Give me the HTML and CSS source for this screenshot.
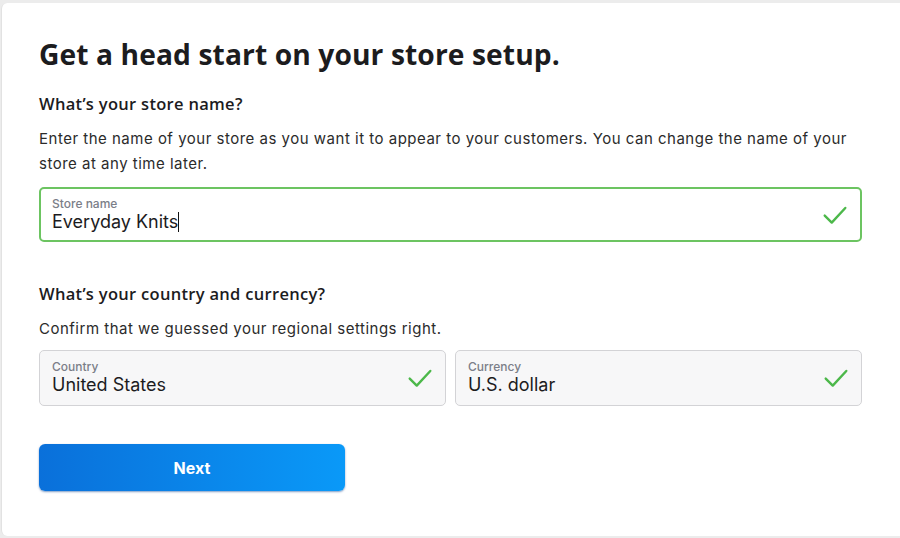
FILE: index.html
```html
<!DOCTYPE html>
<html lang="en">
<head>
<meta charset="utf-8">
<title>Store setup</title>
<link rel="stylesheet" href="styles.css">
</head>
<body>
<main class="card">
  <h1 class="title">Get a head start on your store setup.</h1>

  <section class="section">
    <h2 class="question">What’s your store name?</h2>
    <p class="help">Enter the name of your store as you want it to appear to your customers. You can change the name of your store at any time later.</p>
    <div class="field field-active">
      <div class="field-body">
        <span class="field-label">Store name</span>
        <span class="field-value">Everyday Knits<span class="caret"></span></span>
      </div>
      <svg class="check" viewBox="0 0 24 24" width="26" height="26"><path d="M2.5 12.5 L9 19 L21.5 5.5" fill="none" stroke="#4cb84a" stroke-width="2.2" stroke-linecap="round" stroke-linejoin="round"/></svg>
    </div>
  </section>

  <section class="section section-2">
    <h2 class="question">What’s your country and currency?</h2>
    <p class="help help-short">Confirm that we guessed your regional settings right.</p>
    <div class="row">
      <div class="field field-select">
        <div class="field-body">
          <span class="field-label">Country</span>
          <span class="field-value">United States</span>
        </div>
        <svg class="check" viewBox="0 0 24 24" width="26" height="26"><path d="M2.5 12.5 L9 19 L21.5 5.5" fill="none" stroke="#4cb84a" stroke-width="2.2" stroke-linecap="round" stroke-linejoin="round"/></svg>
      </div>
      <div class="field field-select">
        <div class="field-body">
          <span class="field-label">Currency</span>
          <span class="field-value">U.S. dollar</span>
        </div>
        <svg class="check" viewBox="0 0 24 24" width="26" height="26"><path d="M2.5 12.5 L9 19 L21.5 5.5" fill="none" stroke="#4cb84a" stroke-width="2.2" stroke-linecap="round" stroke-linejoin="round"/></svg>
      </div>
    </div>
  </section>

  <button class="next" type="button">Next</button>
</main>
</body>
</html>
```

FILE: styles.css
```css
* { box-sizing: border-box; }
html, body { margin: 0; height: 100%; }
body {
  background: #ececec;
  padding: 3px 0 2px 1px;
  font-family: Inter, "Noto Sans", sans-serif;
  color: #1f1f1f;
  overflow: hidden;
}
.card {
  background: #ffffff;
  border-radius: 6px 0 0 6px;
  border-left: 1px solid #e2e2e2;
  height: 533px;
  padding: 35px 38px 0 37px;
  width: 905px;
}
.title {
  margin: 0;
  font-family: "Open Sans", Lato, sans-serif;
  font-weight: 700;
  font-size: 28.2px;
  line-height: 32px;
  color: #1c1c1e;
  letter-spacing: 0.1px;
}
.section { margin-top: 24px; }
.section-2 { margin-top: 42px; }
.question {
  margin: 0;
  font-family: "Open Sans", Lato, sans-serif;
  font-weight: 600;
  font-size: 16.5px;
  line-height: 20px;
  color: #1c1c1e;
  letter-spacing: 0.3px;
}
.help {
  margin: 12px 0 11px;
  font-size: 15px;
  line-height: 25px;
  color: #2b2b2b;
  letter-spacing: 0.5px;
  max-width: 820px;
}
.help-short { margin-bottom: 9px; }
.field {
  display: flex;
  align-items: center;
  justify-content: space-between;
  border-radius: 5px;
  width: 823px;
}
.field-active {
  height: 55px;
  border: 2px solid #6cc461;
  padding: 0 12px 0 11px;
}
.field-body { display: flex; flex-direction: column; }
.field-label {
  font-size: 12px;
  line-height: 14px;
  color: #7b7e88;
  font-weight: 500;
}
.field-value {
  font-size: 18px;
  line-height: 22px;
  color: #1c1c1e;
}
.caret {
  display: inline-block;
  width: 1px;
  height: 20px;
  background: #111;
  vertical-align: -4px;
}
.check { flex: none; }
.row {
  display: flex;
  gap: 9px;
  width: 823px;
}
.field-select {
  flex: 1;
  height: 56px;
  background: #f7f7f8;
  border: 1px solid #d3d3d6;
  padding: 0 12px 0 12px;
}
.next {
  margin-top: 38px;
  display: block;
  width: 306px;
  height: 47px;
  border: none;
  border-radius: 6px;
  background: linear-gradient(90deg, #0a70da 0%, #0a99f8 100%);
  box-shadow: 0 1px 2px rgba(0, 60, 140, 0.5);
  color: #ffffff;
  font-family: Inter, "Noto Sans", sans-serif;
  font-weight: 700;
  font-size: 16px;
}
```
